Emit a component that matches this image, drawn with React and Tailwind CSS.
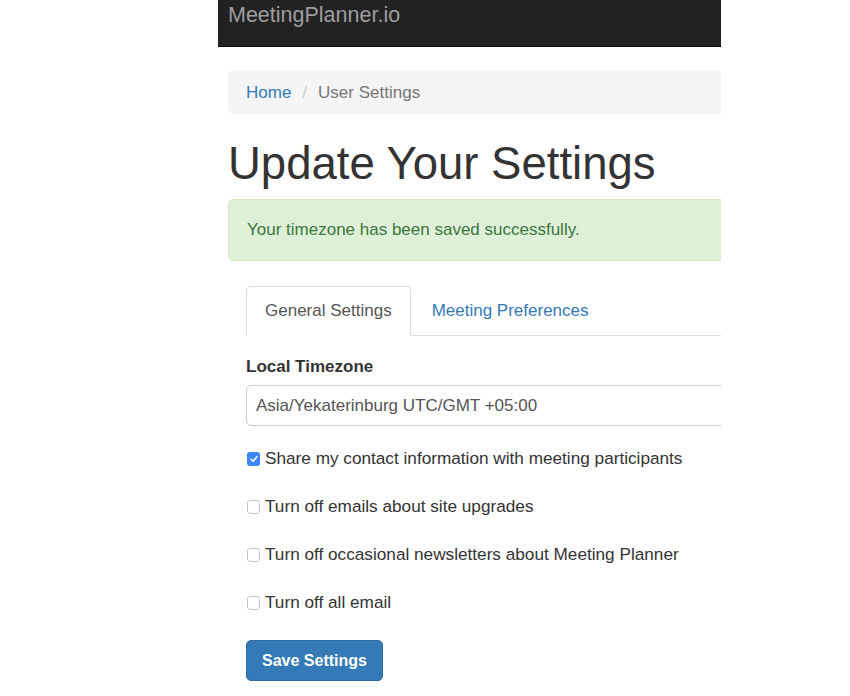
import { useState } from 'react';

function Check({ checked, onChange, label }) {
  return (
    <label className="flex h-[24px] items-center gap-[5px] cursor-pointer">
      <span
        onClick={onChange}
        className={
          checked
            ? 'ml-px flex h-[14px] w-[13px] items-center justify-center rounded-[3px] bg-[#3b87f5]'
            : 'ml-px h-[14px] w-[13px] rounded-[3px] border border-[#c4c4c4] bg-white'
        }
      >
        {checked && (
          <svg viewBox="0 0 12 12" className="h-[10px] w-[10px]">
            <path d="M2.5 6.3 L5 8.8 L9.5 3.2" fill="none" stroke="#fff" strokeWidth="1.8" strokeLinecap="round" strokeLinejoin="round" />
          </svg>
        )}
      </span>
      <span className="text-[17.2px] text-[#333]">{label}</span>
    </label>
  );
}

export default function App() {
  const [opts, setOpts] = useState([true, false, false, false]);
  const labels = [
    'Share my contact information with meeting participants',
    'Turn off emails about site upgrades',
    'Turn off occasional newsletters about Meeting Planner',
    'Turn off all email',
  ];

  const toggle = (i) => setOpts(opts.map((v, j) => (j === i ? !v : v)));

  return (
    <div className="min-h-screen bg-white font-['Liberation_Sans',Arial,sans-serif]">
      <div className="ml-[218px] w-[503px] overflow-hidden">
        <nav className="h-[47px] border-b border-[#080808] bg-[#222]">
          <div className="pl-[10px] pt-[2px] text-[21.5px] leading-[26px] text-[#9d9d9d]">MeetingPlanner.io</div>
        </nav>

        <div className="w-[580px] pl-[10px]">
          <div className="mt-[24px] flex h-[43px] items-center rounded-[5px] bg-[#f5f5f5] px-[18px] text-[17px]">
            <a href="#" className="text-[#337ab7]">Home</a>
            <span className="mx-[11px] text-[#ccc]">/</span>
            <span className="text-[#777]">User Settings</span>
          </div>

          <h1 className="mt-[26px] text-[45.5px] leading-[48px] font-normal text-[#333]">Update Your Settings</h1>

          <div className="mt-[11px] flex h-[62px] items-center rounded-[5px] border border-[#d6e9c6] bg-[#dff0d8] px-[18px] text-[17px] text-[#3c763d]">
            Your timezone has been saved successfully.
          </div>

          <div className="px-[18px]">
            <div className="mt-[25px] flex border-b border-[#ddd]">
              <div className="-mb-px flex h-[50px] items-center rounded-t-[5px] border border-[#ddd] border-b-white bg-white px-[18px] text-[17px] text-[#555]">
                General Settings
              </div>
              <a href="#" className="ml-[1px] flex h-[49px] items-center px-[20px] text-[17px] text-[#337ab7]">
                Meeting Preferences
              </a>
            </div>

            <div className="mt-[19px] text-[17px] leading-[24px] font-bold text-[#333]">Local Timezone</div>
            <div className="mt-[6px] flex h-[41px] items-center rounded-[5px] border border-[#ccc] bg-white px-[9px] text-[17px] text-[#555]">
              Asia/Yekaterinburg UTC/GMT +05:00
            </div>

            <div className="mt-[21px] flex flex-col gap-[24px]">
              {labels.map((l, i) => (
                <Check key={l} label={l} checked={opts[i]} onChange={() => toggle(i)} />
              ))}
            </div>

            <button className="mt-[25px] h-[41px] rounded-[5px] border border-[#2e6da4] bg-[#337ab7] px-[15px] text-[16px] font-bold text-white">
              Save Settings
            </button>
          </div>
        </div>
      </div>
    </div>
  );
}
